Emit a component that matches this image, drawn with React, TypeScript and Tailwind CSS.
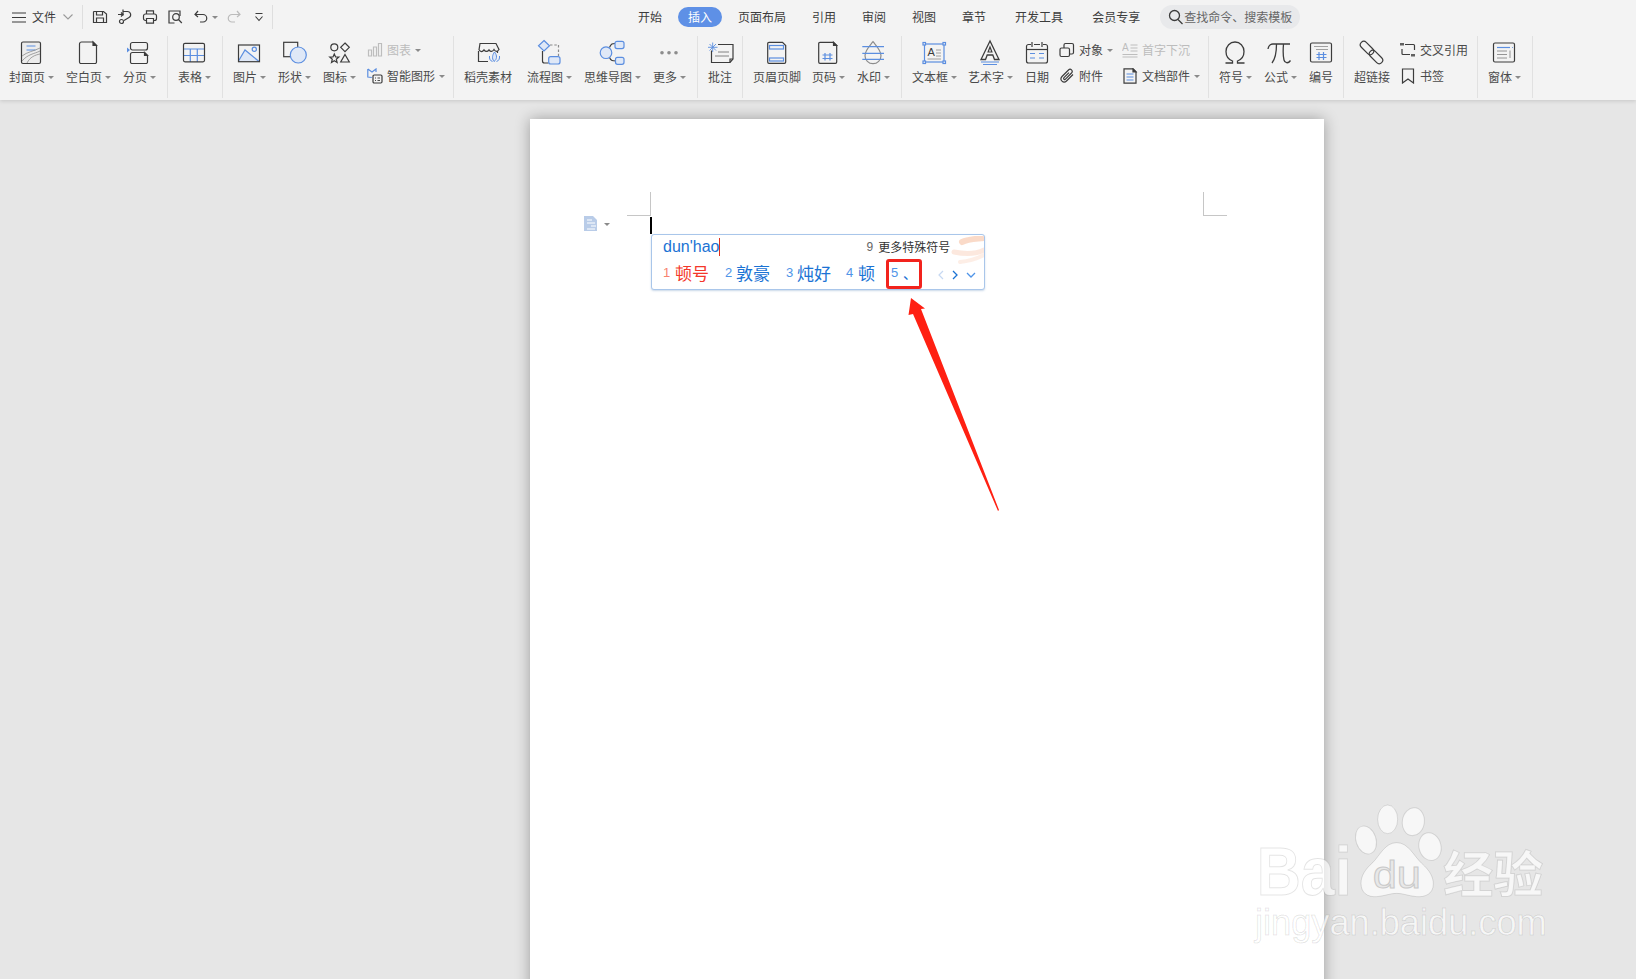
import React from "react";

const S = "#3c3c3c";
const B = "#5b8ee0";
const L = "#dfe8f7";

function Big({ children }: { children: React.ReactNode }) {
  return (
    <div className="h-[30px] w-0 flex justify-center">
      <svg width="32" height="30" viewBox="0 0 32 30" fill="none" stroke={S} strokeWidth="1.2" className="shrink-0">
        {children}
      </svg>
    </div>
  );
}

function Tri({ c = "" }: { c?: string }) {
  return <span className={"inline-block w-0 h-0 border-x-[3px] border-t-[3px] border-x-transparent border-t-[#8a8a8a] " + c} />;
}

function Cell({ label, arrow = true, className = "", children }: { label: string; arrow?: boolean; className?: string; children: React.ReactNode }) {
  return (
    <div className={"flex flex-col items-center " + className}>
      <Big>{children}</Big>
      <div className="mt-[3px] h-[14px] flex items-center text-[12px] leading-[14px] text-[#4a4a4a] whitespace-nowrap">
        {label}
        {arrow && <Tri c="ml-[3px] -mr-[1px]" />}
      </div>
    </div>
  );
}

function Row({ icon, label, arrow, gray, className = "" }: { icon: React.ReactNode; label: string; arrow?: boolean; gray?: boolean; className?: string }) {
  return (
    <div className={"h-[16px] flex items-center whitespace-nowrap " + className}>
      <svg width="16" height="16" viewBox="0 0 16 16" fill="none" stroke={gray ? "#bdbdbd" : S} strokeWidth="1.2" className="shrink-0">
        {icon}
      </svg>
      <span className={"ml-[4px] text-[12px] leading-[14px] " + (gray ? "text-[#bcbcbc]" : "text-[#4a4a4a]")}>{label}</span>
      {arrow && <Tri c="ml-[4px]" />}
    </div>
  );
}

function Stack({ className = "", children }: { className?: string; children: React.ReactNode }) {
  return <div className={"flex flex-col gap-[10px] pt-[5px] " + className}>{children}</div>;
}

function Group({ className = "", children }: { className?: string; children: React.ReactNode }) {
  return <div className={"h-[62px] shrink-0 flex pt-[1px] border-r border-[#e1e1e1] " + className}>{children}</div>;
}

function Q({ children, className = "" }: { children: React.ReactNode; className?: string }) {
  return (
    <svg width="16" height="16" viewBox="0 0 16 16" fill="none" stroke={S} strokeWidth="1.2" className={"shrink-0 " + className}>
      {children}
    </svg>
  );
}

function Tab({ label, className = "" }: { label: string; className?: string }) {
  return <span className={"text-[12px] leading-[14px] text-[#3c3c3c] whitespace-nowrap " + className}>{label}</span>;
}

function Watermark() {
  const fill = "rgba(255,255,255,0.66)";
  const line = "rgba(0,0,0,0.11)";
  return (
    <svg className="absolute left-[1220px] top-[780px]" width="416" height="199" viewBox="0 0 1248 597">
      <g fill={fill} stroke={line} strokeWidth="3">
        <ellipse cx="503" cy="118" rx="30" ry="43" />
        <ellipse cx="580" cy="125" rx="33" ry="42" transform="rotate(8 580 125)" />
        <ellipse cx="438" cy="180" rx="30" ry="43" transform="rotate(-18 438 180)" />
        <ellipse cx="630" cy="200" rx="33" ry="42" transform="rotate(-14 630 200)" />
        <path d="M530 188c35 0 50 38 75 62 25 22 35 42 35 62 0 30-25 40-50 38-25-2-40-10-60-10s-35 8-60 10c-28 2-47-12-47-40 0-22 12-42 35-62 22-22 37-60 72-60Z" />
        <text x="110" y="345" fontFamily="'Liberation Sans',sans-serif" fontWeight="700" fontSize="208" textLength="285" lengthAdjust="spacingAndGlyphs">Bai</text>
        <text x="670" y="335" fontFamily="'Noto Sans CJK SC',sans-serif" fontWeight="700" fontSize="148" textLength="300" lengthAdjust="spacingAndGlyphs">经验</text>
        <text x="105" y="465" fontFamily="'Liberation Sans',sans-serif" fontSize="112" textLength="875" lengthAdjust="spacingAndGlyphs">jingyan.baidu.com</text>
      </g>
      <text x="458" y="325" fontFamily="'Liberation Sans',sans-serif" fontSize="118" fill="#e8e8e8" stroke="#c9c9c9" strokeWidth="3" textLength="145" lengthAdjust="spacingAndGlyphs">du</text>
    </svg>
  );
}

export default function App() {
  return (
    <div className="relative w-[1636px] h-[979px] overflow-hidden bg-[#e6e6e6] flex flex-col font-['Noto_Sans_CJK_SC',sans-serif]">
      {/* toolbar */}
      <div className="relative z-10 h-[100px] shrink-0 bg-[#f3f3f3] shadow-[0_1px_4px_rgba(0,0,0,0.14)]">
        <div className="h-[36px] flex items-center pb-[2px]">
          <svg width="14" height="11" viewBox="0 0 14 11" stroke={S} strokeWidth="1.1" className="ml-[12px]"><path d="M0 1h14M0 5.500h14M0 10h14" /></svg>
          <Tab label="文件" className="ml-[6px]" />
          <svg width="10" height="6" viewBox="0 0 10 6" fill="none" stroke="#9a9a9a" strokeWidth="1.1" className="ml-[7px]"><path d="M.5.500 5 5l4.500-4.500" /></svg>
          <div className="ml-[9px] w-px h-[24px] bg-[#dedede]" />
          <Q className="ml-[9px]"><path d="M2 2.500h9.500L14.500 5v8.500H1.500V3Z" /><path d="M4.500 2.500v3.500h6v-3.500M4.500 13.500V9h7v4.500" /></Q>
          <Q className="ml-[9px]"><path d="M6 2.500h4.500a3.200 3.200 0 0 1 1.500 6l-5 3" /><path d="M1 5.500h5M4 3.500l2 2-2 2" /><circle cx="4.500" cy="12.500" r="2" /><path d="M6 .5v6" /></Q>
          <Q className="ml-[9px]"><path d="M4.500 5V1.800h7V5" /><rect x="1.500" y="5" width="13" height="6.500" rx="2" /><path d="M4.500 9.500h7v4.700h-7z" fill="#f3f3f3" /></Q>
          <Q className="ml-[9px]"><path d="M7.500 14H2V2h11v5" /><circle cx="9" cy="8" r="3.300" /><path d="m11.500 10.500 3.300 3.500" /></Q>
          <Q className="ml-[10px]"><path d="M5 2 2 5.500 5 8" /><path d="M2.500 5.500H10a3.500 3.500 0 0 1 0 7.500H7" /></Q>
          <Tri c="ml-[3px]" />
          <Q className="ml-[8px] opacity-30"><path d="M11 2l3 3.500L11 8" /><path d="M13.500 5.500H6a3.500 3.500 0 0 0 0 7.500h3" /></Q>
          <Q className="ml-[9px]"><path d="M4.500 4.500h7" strokeWidth="1" /><path d="M4.500 7.500l3.500 4 3.500-4" strokeWidth="1.100" /></Q>
          <div className="ml-[5px] w-px h-[24px] bg-[#dedede]" />
          <Tab label="开始" className="ml-[365px]" />
          <span className="ml-[16px] w-[44px] h-[20px] rounded-full bg-[#5e90e6] text-white text-[12px] leading-[20px] text-center">插入</span>
          <Tab label="页面布局" className="ml-[16px]" />
          <Tab label="引用" className="ml-[26px]" />
          <Tab label="审阅" className="ml-[26px]" />
          <Tab label="视图" className="ml-[26px]" />
          <Tab label="章节" className="ml-[26px]" />
          <Tab label="开发工具" className="ml-[29px]" />
          <Tab label="会员专享" className="ml-[29px]" />
          <div className="ml-[20px] w-[140px] h-[24px] rounded-full bg-[#e8e9eb] flex items-center pl-[8px]">
            <svg width="16" height="16" viewBox="0 0 16 16" fill="none" stroke={S} strokeWidth="1.300"><circle cx="6.500" cy="6.500" r="5" /><path d="m10 10.500 4.500 4.500" /></svg>
            <span className="text-[12px] leading-[14px] text-[#666] whitespace-nowrap">查找命令、搜索模板</span>
          </div>
        </div>

        <div className="flex">
          <Group className="w-[168px] pl-[9px] gap-[13px]">
            <Cell label="封面页">
              <rect x="6.500" y="5" width="19" height="21.500" rx="1.500" fill="#ececec" />
              <path d="M11.500 9h9M11.500 13h9" stroke={B} />
              <path d="M7 19c5-4 12-5 18-8M7 24c6-7 12-7 18-10M12 26c3-6 8-8 13-9" stroke="#8c8c8c" strokeWidth="0.800" />
            </Cell>
            <Cell label="空白页">
              <path d="M9.500 5H21l3.500 3.500V25a1.500 1.500 0 0 1-1.500 1.500H9A1.500 1.500 0 0 1 7.500 25V7A2 2 0 0 1 9.500 5Z" />
              <path d="M21 5l3.500 3.500H21z" fill={S} />
            </Cell>
            <Cell label="分页">
              <rect x="7.500" y="5.500" width="17" height="7.500" rx="2" />
              <path d="M9.500 15.500H21.500l3 3V25a1.500 1.500 0 0 1-1.500 1.500H9A1.500 1.500 0 0 1 7.500 25v-7.500a2 2 0 0 1 2-2Z" />
              <path d="M21.500 15.500l3 3h-3z" fill={S} />
              <path d="M4 10.500l3 2.500-3 2.500z" fill={B} stroke="none" />
            </Cell>
          </Group>
          <Group className="w-[55px] pl-[10px]">
            <Cell label="表格">
              <path d="M12.300 12v13M19.300 12v13M6 12h20M6 18.500h20" stroke={B} />
              <rect x="5.500" y="6.300" width="21" height="18.500" rx="1.500" />
            </Cell>
          </Group>
          <Group className="w-[231px] pl-[10px]">
            <Cell label="图片">
              <path d="M5.500 24.500 12 13l7 6 7 5.500Z" fill={L} stroke="none" />
              <path d="M5.500 24 12 13l14 11.500" stroke={B} />
              <circle cx="21.300" cy="12.300" r="2.100" stroke={B} />
              <rect x="5.500" y="8" width="21" height="16.700" />
            </Cell>
            <Cell label="形状" className="ml-[13px]">
              <rect x="5.700" y="5.300" width="14" height="14.400" />
              <circle cx="20.300" cy="18" r="8" fill={L} stroke={B} />
            </Cell>
            <Cell label="图标" className="ml-[13px]">
              <circle cx="11.300" cy="10.300" r="3.500" />
              <path d="m22 6 4.300 4.300-4.300 4.300-4.300-4.300Z" />
              <path d="m11.300 17 1.300 3h3.200l-2.500 2.200.8 3.300-2.800-1.700-2.800 1.700.8-3.300-2.500-2.200H10Z" />
              <path d="m22 17.500 4.300 7.500h-8.600Z" />
            </Cell>
            <Stack className="ml-[12px]">
              <Row gray label="图表" arrow icon={<path d="M1.500 14V8h3v6ZM6.500 14V5h3v9ZM11.500 14V1.500h3V14Z" />} />
              <Row label="智能图形" arrow icon={<><path d="M.8 1v8l4 .5M.8 1 5 4l4-3v3" stroke={B} /><rect x="6" y="7" width="9" height="8" rx="1.200" /><path d="M8 10h1M8 12.500h1M10.500 10h2.500M10.500 12.500h2.500" strokeWidth="0.900" /></>} />
            </Stack>
          </Group>
          <Group className="w-[244px] pl-[10px]">
            <Cell label="稻壳素材" arrow={false}>
              <path d="M8 6.500h16l3 6c-1.500 2.500-3.500 2.500-5 0-1.500 2.500-3.500 2.500-5 .3-1.500 2.200-3.500 2.200-5 0-1.500 2.200-3.500 2.500-5 0Z" />
              <path d="M6.500 14v10.500H16M25.500 14v2" />
              <path d="M22.500 15c-2 3-3 6-.5 9.500 3-2 3.500-6 .5-9.500ZM17.500 19c-.5 3 1 5 3 5.500M27.500 19c.5 3-1 5-3 5.500" stroke={B} fill={L} strokeWidth="1" />
            </Cell>
            <Cell label="流程图" className="ml-[15px]">
              <path d="m11 3.500 5.500 5.300L11 14l-5.500-5.200Z" stroke={B} fill={L} />
              <path d="M17 8h8.500v11" stroke="#8a8a8a" strokeDasharray="2.500 1.800" />
              <path d="M9.500 14v10a2 2 0 0 0 2 2h4" />
              <rect x="15.700" y="19.700" width="11.300" height="7.300" rx="2" stroke={B} fill={L} />
            </Cell>
            <Cell label="思维导图" className="ml-[13px]">
              <path d="M13.500 10.500c1.500-4 3-4 5.500-4M13.500 20.500c1.500 3.500 3 3.500 6.500 3.500" />
              <circle cx="10" cy="15.700" r="5.800" stroke={B} fill={L} />
              <rect x="19" y="4.300" width="9" height="7.300" rx="2" stroke={B} fill={L} />
              <rect x="19.500" y="20.300" width="8.500" height="7" rx="2" stroke={B} fill={L} />
            </Cell>
            <Cell label="更多" className="ml-[13px]">
              <g fill="#8c8c8c" stroke="none"><circle cx="9" cy="15.700" r="1.800" /><circle cx="16" cy="15.700" r="1.800" /><circle cx="23" cy="15.700" r="1.800" /></g>
            </Cell>
          </Group>
          <Group className="w-[45px] pl-[10px]">
            <Cell label="批注" arrow={false}>
              <path d="M14 7.500h15v14.500l-3 3.500H7.500v-12" />
              <path d="M26 25.500v-3.500h3" />
              <path d="M8.700 5.500v9.500M4 10.300h9.500M5.500 7l6.500 6.500M12 7l-6.500 6.500" stroke={B} strokeWidth="0.900" />
              <path d="M14 15h11M11 19h14" stroke="#777" strokeWidth="0.900" />
            </Cell>
          </Group>
          <Group className="w-[159px] pl-[10px]">
            <Cell label="页眉页脚" arrow={false}>
              <path d="M8 5.300h13.500l3.200 3.200V25a1.300 1.300 0 0 1-1.300 1.300H8A1.300 1.300 0 0 1 6.700 25V6.600A1.300 1.300 0 0 1 8 5.300Z" />
              <rect x="8.500" y="8.500" width="14" height="3.500" stroke={B} />
              <rect x="8.500" y="21" width="14" height="3" stroke={B} />
            </Cell>
            <Cell label="页码" className="ml-[11px]">
              <path d="M8 5.300h13.500l3.200 3.200V25a1.300 1.300 0 0 1-1.300 1.300H8A1.300 1.300 0 0 1 6.700 25V6.600A1.300 1.300 0 0 1 8 5.300Z" />
              <path d="M21.500 5.300l3.200 3.200h-3.200z" fill={S} />
              <path d="M13 16v7.500M18 16v7.500M10.500 18h10M10.500 21.500h10" stroke={B} />
            </Cell>
            <Cell label="水印" className="ml-[13px]">
              <path d="M16 4.700c4 5 8 8.500 8 14a8 8 0 0 1-16 0c0-5.500 4-9 8-14Z" stroke="#8c8c8c" />
              <path d="M5.300 9.700H27M5.300 16.300H27M5.300 22.300H27" stroke={B} />
            </Cell>
          </Group>
          <Group className="w-[307px] pl-[10px]">
            <Cell label="文本框">
              <rect x="6.500" y="7" width="19.500" height="18" stroke={B} />
              <g fill="#f3f3f3" stroke={B}><rect x="5" y="5.500" width="2.500" height="2.500" /><rect x="25" y="5.500" width="2.500" height="2.500" /><rect x="5" y="24" width="2.500" height="2.500" /><rect x="25" y="24" width="2.500" height="2.500" /></g>
              <text x="9.500" y="19" fontSize="11" fontFamily="'Liberation Sans',sans-serif" fill={S} stroke="none">A</text>
              <path d="M18 13h5M18 16h5M18 19h5M9.500 22h13.500" stroke="#8a8a8a" strokeWidth="0.800" />
            </Cell>
            <Cell label="艺术字" className="ml-[12px]">
              <path d="M16 4 7 22.500h4.500l1.700-4.500h5.600l1.700 4.500H25Z" strokeWidth="1.300" />
              <path d="m16 10-1.900 5h3.800Z" />
              <path d="M7 25h18M9 27.500h14" stroke={B} />
            </Cell>
            <Cell label="日期" arrow={false} className="ml-[13px]">
              <path d="M10 7.500H7.500a2 2 0 0 0-2 2V24a2 2 0 0 0 2 2h17a2 2 0 0 0 2-2V9.500a2 2 0 0 0-2-2H22M13 7.500h6" />
              <path d="M11 5v5M21 5v5" />
              <path d="M6 12.500h20" />
              <path d="M9 16.500h5M18 16.500h5M9 21h5M18 21h5" stroke={B} />
            </Cell>
            <Stack className="ml-[10px]">
              <Row label="对象" arrow icon={<><rect x="5" y="1.500" width="9.500" height="10.500" rx="1.500" /><rect x="1" y="6" width="9.500" height="8.500" rx="1.500" fill="#f3f3f3" /></>} />
              <Row label="附件" icon={<path d="M14 6.500 7.500 13c-3 3-7.500-1-4.500-4.500L9.500 2c2-2 5 .8 3 3L6.500 11.200c-1 1-2.500-.3-1.500-1.500L10 4.700" />} />
            </Stack>
            <Stack className="ml-[9px]">
              <Row gray label="首字下沉" icon={<><text x="0" y="9" fontSize="10" fontFamily="'Liberation Sans',sans-serif" fill="#bdbdbd" stroke="none">A</text><path d="M8.500 3h7M8.500 6h7M8.500 9h7M.5 12.500h15M.5 15h15" /></>} />
              <Row label="文档部件" arrow icon={<><path d="M2 .8h9l3 3V15.200H2Z" /><path d="M11 .8l3 3h-3z" fill={S} /><path d="M4.500 6h7M4.500 9h7M4.500 12h7" stroke={B} /></>} />
            </Stack>
          </Group>
          <Group className="w-[135px] pl-[10px]">
            <Cell label="符号">
              <path d="M6.500 26h7v-2c-4-1.500-6.500-5-6.500-9.500C7 9 11 5 16 5s9 4 9 9.500c0 4.500-2.500 8-6.500 9.500v2h7" strokeWidth="1.300" />
            </Cell>
            <Cell label="公式" className="ml-[13px]">
              <path d="M4 12c.5-3 2-5 5-5h17M12.500 7c0 7-.5 14-4.500 19M19.500 7c-.5 6-.5 12 .5 16 .7 3 4 4 6.500 .5" strokeWidth="1.300" />
            </Cell>
            <Cell label="编号" arrow={false} className="ml-[13px]">
              <rect x="5.500" y="6" width="21" height="19" rx="1.500" />
              <path d="M9 9.500h14M11 12.500h12" stroke="#8a8a8a" strokeWidth="0.800" />
              <path d="M14 15v8M18.500 15v8M11.500 17.500h10M11.500 20.500h10" stroke={B} />
            </Cell>
          </Group>
          <Group className="w-[134px] pl-[10px]">
            <Cell label="超链接" arrow={false}>
              <rect x="3" y="7.500" width="16" height="7" rx="3.500" transform="rotate(45 11 11)" />
              <rect x="12" y="16.500" width="16" height="7" rx="3.500" transform="rotate(45 20 20)" />
            </Cell>
            <Stack className="ml-[10px]">
              <Row label="交叉引用" icon={<><path d="M5 2.500h8.500a1 1 0 0 1 1 1V8M2 7v4.500a1 1 0 0 0 1 1h7" /><path d="M1 1v2.500M3 1v2.500M12 12v2.500M14 12v2.500" strokeWidth="1.600" /></>} />
              <Row label="书签" icon={<path d="M2.500 1h11v14L8 11l-5.500 4Z" />} />
            </Stack>
          </Group>
          <Group className="w-[55px] pl-[10px]">
            <Cell label="窗体">
              <rect x="5.500" y="6" width="21" height="19" rx="1.500" />
              <path d="M9 10.500h13" stroke={B} />
              <path d="M24 10.500h.8" stroke={B} />
              <path d="M9 14h10M9 17.500h10M9 21h10M22 13.500V21" stroke="#8a8a8a" strokeWidth="0.900" />
            </Cell>
          </Group>
        </div>
      </div>

      {/* canvas */}
      <div className="flex-1 pl-[530px] pt-[19px] min-h-0">
        <div className="relative w-[794px] h-[900px] bg-white shadow-[0_0_14px_rgba(0,0,0,0.32)]">
          {/* crop marks */}
          <div className="absolute left-[673px] top-[73px] w-[24px] h-[24px] border-l border-b border-[#c6c6c6]" />
          <div className="absolute left-[97px] top-[73px] w-[24px] h-[24px] border-r border-b border-[#c6c6c6]" />
          {/* paragraph icon */}
          <div className="absolute left-[54px] top-[97px] flex items-center">
            <svg width="14" height="16" viewBox="0 0 14 16">
              <path d="M0 0h9l4 4v11H0Z" fill="#b9cce8" />
              <path d="M3 4h5M3 7h8M7 10h5M3 13h8" stroke="#fff" strokeWidth="1.100" />
            </svg>
            <Tri c="ml-[6px]" />
          </div>
          {/* caret */}
          <div className="absolute left-[120px] top-[98px] w-[2px] h-[17px] bg-black" />
          {/* IME popup */}
          <div className="absolute left-[121px] top-[115px] w-[334px] h-[56px] bg-white border border-[#a9c6ea] rounded-[3px] shadow-[0_1px_2px_rgba(100,140,190,0.35)] overflow-hidden">
            <svg className="absolute right-0 top-[1px] blur-[0.6px]" width="36" height="28" viewBox="0 0 36 28" fill="none" stroke="#f8cdb6" strokeLinecap="round">
              <path d="M14 6C20 3 28 3 36 2" strokeWidth="6" opacity="0.75" />
              <path d="M6 16c10 2 22 2 30-2" strokeWidth="5" opacity="0.45" />
              <path d="M12 26c10-1 18-4 24-7" strokeWidth="4" opacity="0.35" />
            </svg>
            <div className="relative h-[24px] flex items-center pl-[11px] font-['Liberation_Sans','Noto_Sans_CJK_SC',sans-serif]">
              <span className="text-[16px] leading-[20px] text-[#1b73d4]">dun'hao</span>
              <span className="w-px h-[18px] bg-[#e0301e]" />
              <span className="ml-[146px] text-[12px] text-[#666]">9</span>
              <span className="ml-[5px] text-[12px] leading-[14px] text-[#333] font-['Noto_Sans_CJK_SC',sans-serif]">更多特殊符号</span>
            </div>
            <div className="relative h-[28px] flex items-center pl-[11px] text-[13px] text-[#4f94e8] font-['Liberation_Sans','Noto_Sans_CJK_SC',sans-serif] whitespace-nowrap">
              <span className="w-[12px] text-[#f8836f]">1</span>
              <span className="w-[34px] text-[17px] leading-[24px] text-[#f4372a] font-['Noto_Sans_CJK_SC',sans-serif]">顿号</span>
              <span className="ml-[16px] w-[11px]">2</span>
              <span className="w-[34px] text-[17px] leading-[24px] text-[#1b73d4] font-['Noto_Sans_CJK_SC',sans-serif]">敦豪</span>
              <span className="ml-[16px] w-[11px]">3</span>
              <span className="w-[34px] text-[17px] leading-[24px] text-[#1b73d4] font-['Noto_Sans_CJK_SC',sans-serif]">炖好</span>
              <span className="ml-[15px] w-[12px]">4</span>
              <span className="w-[17px] text-[17px] leading-[24px] text-[#1b73d4] font-['Noto_Sans_CJK_SC',sans-serif]">顿</span>
              <span className="ml-[16px] w-[12px]">5</span>
              <span className="w-[17px] text-[14px] leading-[24px] text-[#1b73d4] font-['Noto_Sans_CJK_SC',sans-serif]">、</span>
              <svg className="ml-[18px] mt-[3px]" width="6" height="10" viewBox="0 0 6 10" fill="none" stroke="#c6d8f2" strokeWidth="1.200"><path d="M5 1 1 5l4 4" /></svg>
              <svg className="ml-[8px] mt-[3px]" width="6" height="10" viewBox="0 0 6 10" fill="none" stroke="#1b73d4" strokeWidth="1.300"><path d="m1 1 4 4-4 4" /></svg>
              <svg className="ml-[8px] mt-[3px]" width="10" height="6" viewBox="0 0 10 6" fill="none" stroke="#4f94e8" strokeWidth="1.300"><path d="m1 1 4 4 4-4" /></svg>
            </div>
            {/* highlight box */}
            <div className="absolute left-[234px] top-[24px] w-[36px] h-[30px] border-[3px] border-[#f2231d] rounded-[3px]" />
          </div>
        </div>
      </div>

      {/* annotation arrow */}
      <svg className="absolute left-0 top-0 z-20 pointer-events-none" width="1636" height="979" viewBox="0 0 1636 979">
        <polygon points="911,298 925,308.500 921,309 999,510 998,511 913,314 908.500,315" fill="#ff2012" />
      </svg>
      <div className="absolute inset-0 z-20 pointer-events-none">
        <Watermark />
      </div>
    </div>
  );
}
